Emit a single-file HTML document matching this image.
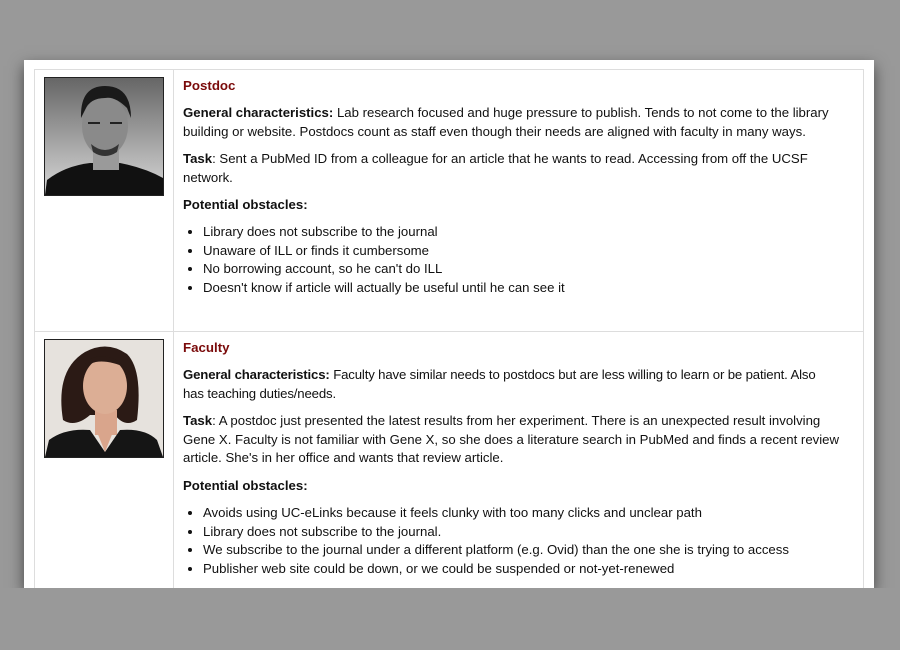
<!DOCTYPE html>
<html><head><style>
body{margin:0;width:900px;height:650px;background:#999;position:relative;overflow:hidden;font-family:"Liberation Sans",Arial,sans-serif;font-size:13px;color:#111}
.panel{position:absolute;left:24px;top:60px;width:850px;height:528px;background:#fff;box-shadow:0 6px 14px rgba(0,0,0,.55)}
.tbl{position:absolute;left:34px;top:69px;width:828px;height:540px;border:1px solid #ddd;border-bottom:none}
.vl{position:absolute;left:173px;top:69px;width:1px;height:520px;background:#ddd}
.hl{position:absolute;left:34px;top:331px;width:829px;height:1px;background:#ddd}
.photo{position:absolute;left:44px;width:118px;height:117px;border:1px solid #222;overflow:hidden}
.t{position:absolute;left:183px;width:700px;line-height:18.5px;margin:0;font-size:13.2px;white-space:nowrap}
h3{position:absolute;left:183px;margin:0;font-size:13.3px;color:#7a0a0a;line-height:18px}
ul{position:absolute;left:183px;margin:0;padding-left:20px;line-height:18.5px;font-size:13.2px;width:680px;white-space:nowrap}
.cover{position:absolute;left:0;top:588px;width:900px;height:62px;background:#999}
</style></head><body>
<div class="panel"></div>
<div class="tbl"></div><div class="vl"></div><div class="hl"></div>
<div class="cover"></div>
<div class="photo" style="top:77px">
<svg width="118" height="117"><defs><linearGradient id="g1" x1="0" y1="0" x2="0" y2="1"><stop offset="0" stop-color="#666"/><stop offset="1" stop-color="#d8d8d8"/></linearGradient></defs>
<rect width="118" height="117" fill="url(#g1)"/>
<path d="M0 117 L2 102 Q20 88 45 85 L75 85 Q100 90 118 100 L118 117Z" fill="#111"/>
<rect x="48" y="70" width="26" height="22" fill="#9a9a9a"/>
<ellipse cx="60" cy="48" rx="23" ry="30" fill="#8a8a8a"/>
<path d="M36 40 Q35 8 60 8 Q86 8 86 40 L82 30 Q70 18 60 20 Q45 20 40 32Z" fill="#1a1a1a"/>
<path d="M43 45 h12 M65 45 h12" stroke="#222" stroke-width="2"/>
<path d="M46 66 Q60 78 74 66 L72 74 Q60 82 48 74Z" fill="#333"/>
</svg></div>
<div class="photo" style="top:339px">
<svg width="118" height="117"><rect width="118" height="117" fill="#e6e2dd"/>
<path d="M18 80 Q10 30 40 12 Q62 0 82 14 Q98 30 92 80 Q80 88 70 75 L45 75 Q30 88 18 80Z" fill="#2b1a15"/>
<rect x="50" y="70" width="22" height="25" fill="#d9a58c"/>
<ellipse cx="60" cy="46" rx="22" ry="28" fill="#dcae95"/>
<path d="M38 30 Q50 14 82 28 Q70 16 56 16 Q40 18 38 30Z" fill="#2b1a15"/>
<path d="M0 117 L4 100 Q20 88 45 90 L60 112 L75 90 Q100 88 112 100 L118 117Z" fill="#151515"/>
<path d="M52 92 L60 112 L68 92Z" fill="#d9a58c"/>
</svg></div>

<h3 style="top:77px">Postdoc</h3>
<p class="t" style="top:104px"><b>General characteristics:</b> Lab research focused and huge pressure to publish. Tends to not come to the library<br>building or website. Postdocs count as staff even though their needs are aligned with faculty in many ways.</p>
<p class="t" style="top:150px"><b>Task</b>: Sent a PubMed ID from a colleague for an article that he wants to read. Accessing from off the UCSF<br>network.</p>
<p class="t" style="top:196px"><b>Potential obstacles:</b></p>
<ul style="top:223px"><li>Library does not subscribe to the journal</li><li>Unaware of ILL or finds it cumbersome</li><li>No borrowing account, so he can't do ILL</li><li>Doesn't know if article will actually be useful until he can see it</li></ul>

<h3 style="top:339px">Faculty</h3>
<p class="t" style="top:366px;letter-spacing:-0.15px"><b>General characteristics:</b> Faculty have similar needs to postdocs but are less willing to learn or be patient. Also<br>has teaching duties/needs.</p>
<p class="t" style="top:412px"><b>Task</b>: A postdoc just presented the latest results from her experiment. There is an unexpected result involving<br>Gene X. Faculty is not familiar with Gene X, so she does a literature search in PubMed and finds a recent review<br>article. She's in her office and wants that review article.</p>
<p class="t" style="top:477px"><b>Potential obstacles:</b></p>
<ul style="top:504px"><li>Avoids using UC-eLinks because it feels clunky with too many clicks and unclear path</li><li>Library does not subscribe to the journal.</li><li>We subscribe to the journal under a different platform (e.g. Ovid) than the one she is trying to access</li><li>Publisher web site could be down, or we could be suspended or not-yet-renewed</li></ul>
</body></html>
